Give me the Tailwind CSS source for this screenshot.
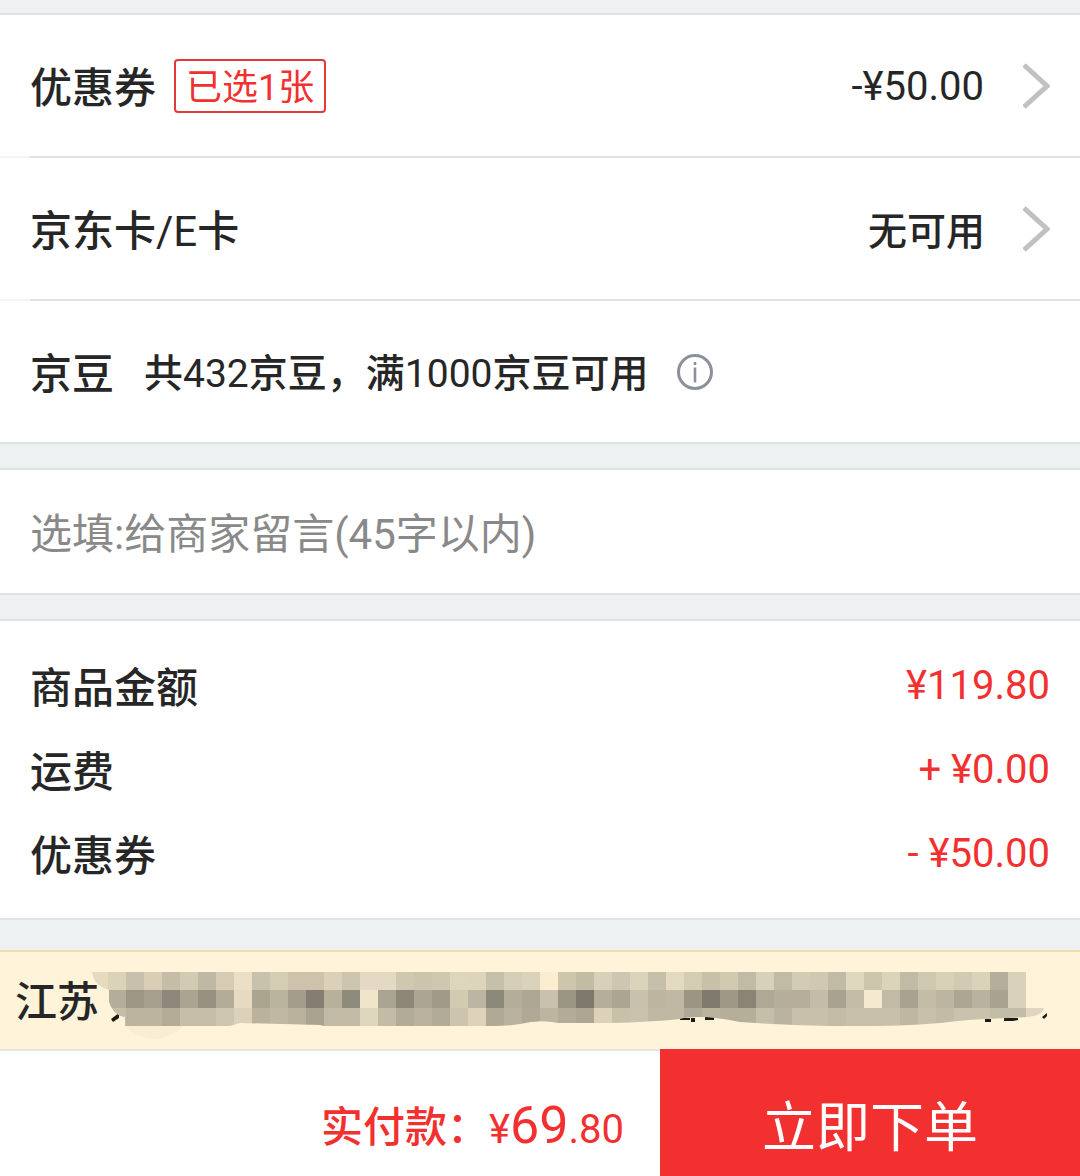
<!DOCTYPE html>
<html lang="zh-CN">
  <head>
    <meta charset="UTF-8" />
    <meta name="viewport" content="width=device-width, initial-scale=1.0" />
    <title>填写订单</title>
    <script src="https://cdn.jsdelivr.net/npm/@tailwindcss/browser@4"></script>
  </head>
  <body
    class="min-h-screen flex flex-col bg-[#edf1f2] pt-[13px] text-[#262626] text-[39px] leading-[60px] font-[Roboto,'Noto_Sans_CJK_SC',sans-serif]"
  >
    <!-- discounts -->
    <section class="bg-white border-y-2 border-[#dfe2e5]">
      <button type="button" class="w-full h-[141px] px-[30px] flex items-center text-left">
        <span class="pt-1.5 text-[42px] font-medium">优惠券</span>
        <span
          class="ml-[18px] h-[54px] px-[10px] pt-1 flex items-center rounded border-2 border-[#e4393c] text-[#f23030] text-[36px]"
          >已选1张</span
        >
        <span class="ml-auto pt-0.5 text-[40px]">-¥50.00</span>
        <svg class="ml-[39px] w-[27px] h-[46px]" viewBox="0 0 27 46" fill="none" stroke="#c1c1c1" stroke-width="5">
          <path d="M1 2 L24 23 L1 44" />
        </svg>
      </button>
      <div class="flex h-[2px]">
        <div class="w-[30px] bg-[#f4f4f4]"></div>
        <div class="flex-1 bg-[#e1e2e3]"></div>
      </div>

      <button type="button" class="w-full h-[141px] px-[30px] flex items-center text-left">
        <span class="pt-1.5 text-[42px] font-medium">京东卡<span class="font-normal">/E</span>卡</span>
        <span class="ml-auto pt-1.5 font-medium">无可用</span>
        <svg class="ml-[38px] w-[27px] h-[46px]" viewBox="0 0 27 46" fill="none" stroke="#c1c1c1" stroke-width="5">
          <path d="M1 2 L24 23 L1 44" />
        </svg>
      </button>
      <div class="flex h-[2px]">
        <div class="w-[30px] bg-[#f4f4f4]"></div>
        <div class="flex-1 bg-[#e1e2e3]"></div>
      </div>

      <div class="h-[141px] px-[30px] flex items-center">
        <span class="pt-1.5 text-[42px] font-medium">京豆</span>
        <span class="ml-[30px] pt-1 font-medium"
          >共<span class="font-normal">432</span>京豆，满<span class="font-normal">1000</span>京豆可用</span
        >
        <button type="button" aria-label="京豆说明" class="ml-7">
          <svg class="w-9 h-9" viewBox="0 0 36 36" fill="none" stroke="#8c9099">
            <circle cx="18" cy="18" r="16.5" stroke-width="3" />
            <path d="M18 8 V11 M18 13.5 V28.5" stroke-width="2.6" />
          </svg>
        </button>
      </div>
    </section>

    <!-- message -->
    <section class="mt-6 bg-white border-y-2 border-[#dfe2e5]">
      <input
        type="text"
        maxlength="45"
        aria-label="给商家留言"
        placeholder="选填:给商家留言(45字以内)"
        class="block w-full h-[123px] px-[30px] pt-1.5 text-[42px] outline-none placeholder:text-[#898989]"
      />
    </section>

    <!-- amounts -->
    <section class="mt-6 bg-white border-y-2 border-[#dfe2e5] pt-6 pb-[21px]">
      <dl class="px-[30px]">
        <div class="h-[84px] flex items-center justify-between">
          <dt class="pt-1 text-[42px] font-medium">商品金额</dt>
          <dd class="pb-0.5 text-[40px] text-[#f23030]">¥119.80</dd>
        </div>
        <div class="h-[84px] flex items-center justify-between">
          <dt class="pt-1 text-[42px] font-medium">运费</dt>
          <dd class="pb-0.5 text-[40px] text-[#f23030]">+ ¥0.00</dd>
        </div>
        <div class="h-[84px] flex items-center justify-between">
          <dt class="pt-1 text-[42px] font-medium">优惠券</dt>
          <dd class="pb-0.5 text-[40px] text-[#f23030]">- ¥50.00</dd>
        </div>
      </dl>
    </section>

    <!-- address -->
    <div class="relative mt-[30px] h-[99px] px-[15px] flex items-center bg-[#fff3da] border-t-2 border-[#eddcb0]">
      <span class="pt-1 text-[42px] font-medium">江苏</span>
      <svg class="absolute left-[90px] top-5 w-[960px] h-[72px]" viewBox="0 0 960 72">
        <clipPath id="smear">
          <path
            d="M2 0 H936 V36 H954 Q952 44 938 45 L918 46 Q880 47 850 51 Q800 55 740 54 Q690 53 650 50 Q610 42 590 47 Q560 50 520 51 L468 51 Q450 47 430 52 Q420 54 400 54 H234 L230 53 L150 51 L140 54 H35 V45 Q24 44 19 30 V18 Q4 14 2 0 Z"
          />
        </clipPath>
        <path d="M36 54 Q44 66 66 67 Q80 66 94 54 Z" fill="#f9edd4" />
        <g fill="#1d1a15">
          <path d="M21 47 L29 41 V46 L23 50 Z M590 46 h10 v2 h-10 Z M601 46 h4 v4 h-4 Z M615 45 h9 v3 h-9 Z" />
          <path d="M895 47 h6 v3 h-6 Z M914 46 h14 v2 l-5 1 h-9 Z M952 45 l5 -4 v3 l-3 3 Z" />
        </g>
        <g id="tiles" clip-path="url(#smear)" shape-rendering="crispEdges"></g>
      </svg>
    </div>

    <!-- pay bar -->
    <footer class="flex-1 flex bg-white text-[#f23030]">
      <div class="flex-1 flex items-start justify-end border-t-2 border-[#e5e5e1] pt-[45px] pr-9">
        <span class="pt-0.5 text-[42px] font-medium">实付款：</span>
        <span class="text-[40px]">¥<span class="text-[52px]">69</span>.80</span>
      </div>
      <button type="button" class="w-[420px] pt-8 bg-[#f23030] text-white text-[54px]">立即下单</button>
    </footer>

    <script>
      // one list per row of tiles, left to right
      const rows = [
        "e6dabf dbd2b8 c8c0aa d9cfb6 c5bda7 d3cab2 bfb8a2 d6ccb4 ebdfc5 c8c1ab d5ccb4 cdc2ab cdc2ab dbd1b8 cdc5ae e4dac3 e4dac3 d0c7b1 cdc4ae d0c7b1 ded5bd ddd4bb c6bfa9 d6ceb6 dbd2ba faedd0 cec6ac c3bca5 d9d0b9 cec6b0 dcd3bb c6bfa9 e4dac0 d5ccb4 c9c0aa d2cab0 c1baa5 d8d0b9 c1baa5 d3cbb4 d0c8b1 c1baa5 e0d7bf cec5ae dcd3bb c1baa5 d0c8b1 d9d0b8 d2cab3 dbd2ba b5ae9b dad1ba",
        "e6dabf b4ad99 9e9685 a69f8d 8f887a aba492 989182 b3ac98 e6dbc1 aba590 bab39e a49d8b 857e70 b7b09b 8f8b7c f0e5cb aaa492 8c8778 aca593 a19a89 d3cab2 bcb5a2 8d897a b4ad9a aea793 cac1ac 9b9583 7f796c b5ae9a aca592 c9c1ab bdb5a0 c0b8a3 9c9584 7f7a6c a09887 8b8475 afa895 b6ae9b b6ae9b c4bca6 a9a290 c4bca6 f5ead0 c2baa5 a9a290 c4bca6 bdb5a0 ada692 b9b29e a9a290 dad1ba",
        "c5bda7 c5bda7 bcb49f bcb49f b4ac97 c6bea8 c6bea8 cfc6b0 dcd2b9 bab29c c0b8a2 b9b19c aaa38f c2baa4 c2baa4 dfd6bd c3bba5 b2ab98 bab29e b2ab98 cdc4ad ddd3bb b0a995 b9b19d b1a995 bdb5a0 b3ab97 aea692 dbd2b9 c8c0a9 cac2ac bfb8a2 c0b8a3 b0a995 bab39d b5ae98 b5ae99 c5bea8 bbb39f c8c0aa c8c0aa c4bca7 c8c0aa c8c0aa c8c0aa bfb7a2 c8c0aa c3bba6 cac2ac cac2ac c3bca7 c3bca7 e0d6bf",
      ];
      const tiles = document.getElementById("tiles");

      rows.forEach((row, y) => {
        row.split(" ").forEach((color, x) => {
          const rect = document.createElementNS("http://www.w3.org/2000/svg", "rect");
          rect.setAttribute("x", x * 18);
          rect.setAttribute("y", y * 18);
          rect.setAttribute("width", 18);
          rect.setAttribute("height", 18);
          rect.setAttribute("fill", "#" + color);
          tiles.appendChild(rect);
        });
      });
    </script>
  </body>
</html>
